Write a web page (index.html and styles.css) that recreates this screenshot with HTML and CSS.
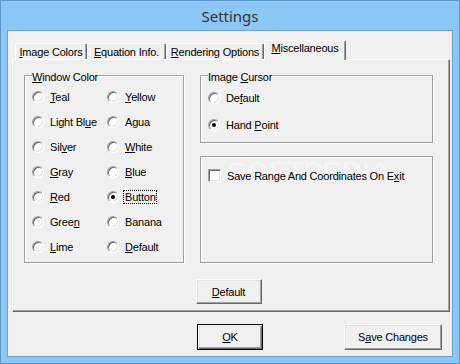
FILE: index.html
```html
<!doctype html>
<html>

<head>
<title>Settings</title>

<link rel="stylesheet" href="styles.css">
</head>

<body>

<div class="window">
	<div class="titlebar">Settings</div>

	<div class="client">
		<div class="tabs">
			<div class="tab t1"><span><u>I</u>mage Colors</span></div>
			<div class="tab t2"><span><u>E</u>quation Info.</span></div>
			<div class="tab t3"><span><u>R</u>endering Options</span></div>
			<div class="tab active"><span><u>M</u>iscellaneous</span></div>
		</div>

		<div class="panel">
			<div class="groups">
				<div class="group colors">
					<div class="legend"><u>W</u>indow Color</div>
					<div class="radio-grid">
						<div class="opt"><span class="radio"></span><span><u>T</u>eal</span></div>
						<div class="opt"><span class="radio"></span><span><u>Y</u>ellow</span></div>
						<div class="opt"><span class="radio"></span><span>Light Bl<u>u</u>e</span></div>
						<div class="opt"><span class="radio"></span><span>Agua</span></div>
						<div class="opt"><span class="radio"></span><span>Sil<u>v</u>er</span></div>
						<div class="opt"><span class="radio"></span><span><u>W</u>hite</span></div>
						<div class="opt"><span class="radio"></span><span><u>G</u>ray</span></div>
						<div class="opt"><span class="radio"></span><span><u>B</u>lue</span></div>
						<div class="opt"><span class="radio"></span><span><u>R</u>ed</span></div>
						<div class="opt"><span class="radio checked"></span><span class="focus">Button</span></div>
						<div class="opt"><span class="radio"></span><span>Gree<u>n</u></span></div>
						<div class="opt"><span class="radio"></span><span>Banana</span></div>
						<div class="opt"><span class="radio"></span><span><u>L</u>ime</span></div>
						<div class="opt"><span class="radio"></span><span><u>D</u>efault</span></div>
					</div>
				</div>

				<div class="side">
					<div class="group cursor">
						<div class="legend">Image <u>C</u>ursor</div>
						<div class="opt"><span class="radio"></span><span>De<u>f</u>ault</span></div>
						<div class="opt"><span class="radio checked"></span><span>Hand <u>P</u>oint</span></div>
					</div>
					<div class="group save">
						<div class="watermark">SOFTPEDIA</div>
						<div class="opt"><span class="check"></span><span>Save Range And Coordinates On E<u>x</u>it</span></div>
					</div>
				</div>
			</div>

			<div class="panel-foot">
				<button class="btn small"><u>D</u>efault</button>
			</div>
		</div>

		<div class="actions">
			<button class="btn ok default"><u>O</u>K</button>
			<button class="btn save-btn">S<u>a</u>ve Changes</button>
		</div>
	</div>
</div>

</body>

</html>
```

FILE: styles.css
```css
html,body {
	margin:0;
	padding:0;
	background-color:#8cc7f6;
}
.window {
	width:460px;
	height:364px;
	box-sizing:border-box;
	border:1px solid #5d95cc;
	background-color:#8cc7f6;
	font-family:"Liberation Sans", Arial, sans-serif;
	font-size:11px;
	letter-spacing:-0.2px;
	color:#000;
}
.titlebar {
	height:29px;
	display:flex;
	align-items:center;
	justify-content:center;
	font-family:"Noto Sans", "Open Sans", sans-serif;
	font-size:15px;
	letter-spacing:0;
	color:#333;
	padding-top:1px;
	box-sizing:border-box;
}
.client {
	margin:0 6px;
	height:327px;
	box-sizing:border-box;
	border:1px solid #6b9fd3;
	background-color:#f0f0f0;
	padding-top:9px;
}
u {text-decoration:underline; text-underline-offset:1px;}

/* tabs */
.tabs {
	display:flex;
	align-items:flex-end;
	height:19px;
	margin-left:7px;
}
.tab {
	height:16px;
	box-sizing:border-box;
	border:1px solid;
	border-bottom:0;
	border-color:#fff #696969 #fff #fff;
	border-radius:2px 2px 0 0;
	box-shadow:inset -1px 0 0 #a0a0a0;
	display:flex;
	align-items:center;
	justify-content:center;
	line-height:13px;
	padding-top:1px;
	white-space:nowrap;
}
.t1 {width:72px;}
.t2 {width:79px;}
.t3 {width:98px;}
.tab.active {
	width:82px;
	height:20px;
	margin-bottom:-1px;
	padding:0 0 5px;
	background-color:#f0f0f0;
	position:relative;
	z-index:1;
}

/* panel */
.panel {
	margin:0 2px 0 4px;
	height:253px;
	box-sizing:border-box;
	border:1px solid;
	border-color:#fff #696969 #696969 #fff;
	box-shadow:inset -1px -1px 0 #a0a0a0;
	padding:15px 16px 0 11px;
}
.groups {
	display:flex;
	gap:16px;
	height:188px;
}
.group {
	box-sizing:border-box;
	border:1px solid #a0a0a0;
	box-shadow:1px 1px 0 #fff, inset 1px 1px 0 #fff;
	padding-left:7px;
}
.legend {
	width:fit-content;
	margin:-5px 0 0 0;
	padding:0 1px 0 0;
	line-height:13px;
	background-color:#f0f0f0;
}
.colors {width:160px;}
.side {
	width:233px;
	display:flex;
	flex-direction:column;
	gap:13px;
}
.cursor {height:68px;}
.save {
	height:107px;
	padding-top:6px;
	position:relative;
}

.radio-grid {
	display:grid;
	grid-template-columns:75px 75px;
	grid-auto-rows:25px;
}
.opt {
	display:flex;
	align-items:center;
	height:25px;
	white-space:nowrap;
	position:relative;
}
.cursor .opt {height:27px;}
.radio {
	width:12px;
	height:12px;
	box-sizing:border-box;
	border-radius:50%;
	border:1px solid;
	border-color:#a0a0a0 #fff #fff #a0a0a0;
	box-shadow:inset 1px 1px 0 #696969, inset -1px -1px 0 #e3e3e3;
	background-color:#fff;
	margin-right:6px;
	position:relative;
	flex:none;
}
.radio.checked::after {
	content:"";
	position:absolute;
	left:3px;
	top:3px;
	width:4px;
	height:4px;
	border-radius:50%;
	background-color:#000;
}
.check {
	width:13px;
	height:13px;
	box-sizing:border-box;
	border:1px solid;
	border-color:#a0a0a0 #fff #fff #a0a0a0;
	box-shadow:inset 1px 1px 0 #696969, inset -1px -1px 0 #e3e3e3;
	background-color:#fff;
	margin-right:6px;
	flex:none;
}
.focus {
	border:1px dotted #000;
	margin-left:-2px;
	padding:0 0 0 1px;
	line-height:12px;
}
.watermark {
	position:absolute;
	left:26px;
	top:-2px;
	font-size:30px;
	font-weight:bold;
	letter-spacing:-1px;
	color:#f4f4f4;
	text-shadow:0 0 1px rgba(0,0,0,0.06);
}
.save .opt {z-index:1;}

/* buttons */
.btn {
	font-family:inherit;
	font-size:11px;
	letter-spacing:-0.2px;
	color:#000;
	background-color:#f0f0f0;
	box-sizing:border-box;
	border:1px solid;
	border-color:#fff #696969 #696969 #fff;
	box-shadow:inset -1px -1px 0 #a0a0a0, inset 1px 1px 0 #e3e3e3;
	padding:0;
	margin:0;
}
.btn.default {
	border:1px solid #000;
	box-shadow:inset 1px 1px 0 #fff, inset -1px -1px 0 #696969, inset -2px -2px 0 #a0a0a0, inset 2px 2px 0 #e3e3e3;
}
.panel-foot {
	display:flex;
	justify-content:center;
	margin-top:16px;
}
.small {width:66px; height:25px;}
.actions {
	display:flex;
	justify-content:flex-end;
	margin-top:12px;
	padding-right:10px;
}
.ok {width:66px; height:26px; margin-right:81px;}
.save-btn {width:98px; height:26px;}
```
